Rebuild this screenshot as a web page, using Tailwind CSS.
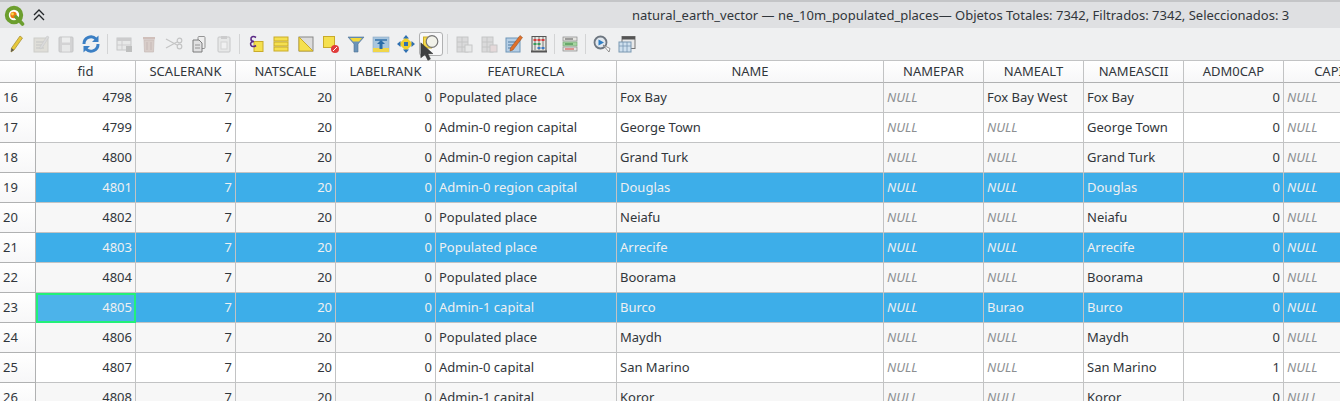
<!DOCTYPE html>
<html lang="es">
<head>
    <meta charset="UTF-8">
    <title>Tabla de atributos</title>
    <script src="https://cdn.jsdelivr.net/npm/@tailwindcss/browser@4"></script>
</head>
<body class="w-[1340px] h-[401px] overflow-hidden bg-[#eff0f1] text-[13px] text-[#31363b] font-['Noto_Sans',sans-serif]">

    <!-- title bar -->
    <div class="h-[28px] flex items-center bg-[#dfe0e2] border-t-2 border-[#c4c5c7] relative">
        <svg class="ml-[4px] w-[21px] h-[21px]" viewBox="0 0 21 21">
            <circle cx="10" cy="10" r="7.2" fill="#fff" stroke="#6c9e2e" stroke-width="4"/>
            <circle cx="9.5" cy="10" r="3.2" fill="#ee7913"/>
            <circle cx="8.5" cy="9" r="1.4" fill="#f7d94c"/>
            <path d="M12 12 L18.5 19" stroke="#6c9e2e" stroke-width="3.6" stroke-linecap="round"/>
        </svg>
        <svg class="ml-[7px] w-[14px] h-[14px]" viewBox="0 0 14 14" fill="none" stroke="#232629" stroke-width="1.3">
            <path d="M2 7 L7 2 L12 7"/><path d="M2 12 L7 7 L12 12"/>
        </svg>
        <span class="absolute left-[632px] top-[3px] leading-[20px] whitespace-nowrap">natural_earth_vector — ne_10m_populated_places— Objetos Totales: 7342, Filtrados: 7342, Seleccionados: 3</span>
    </div>

    <!-- toolbar -->
    <div class="h-[32px] pl-[3px] flex items-center bg-[#eff0f1] relative [&_svg]:blur-[0.3px]">
        <div class="w-[25px] h-[20px] flex justify-center"><svg class="w-[20px] h-[20px]" viewBox="0 0 20 20"><path d="M14 2 L16.5 4 L8 16 L5 18 L5.5 14 Z" fill="#e8c93a" stroke="#a8923a" stroke-width="0.8"/><path d="M5 18 L5.5 14 L8 16 Z" fill="#555"/></svg></div>
        <div class="w-[25px] h-[20px] flex justify-center opacity-40"><svg class="w-[20px] h-[20px]" viewBox="0 0 20 20"><rect x="3" y="4" width="14" height="14" fill="#c9c4b4" stroke="#9a9a90"/><path d="M5 8H13M5 11H13M5 14H13" stroke="#888"/><path d="M16 2 L18 3 L11 14 L9 15 L9 13 Z" fill="#bbb" stroke="#888" stroke-width="0.5"/></svg></div>
        <div class="w-[25px] h-[20px] flex justify-center opacity-40"><svg class="w-[20px] h-[20px]" viewBox="0 0 20 20"><rect x="3" y="3" width="14" height="15" rx="1" fill="#aaa" stroke="#888"/><rect x="6" y="3.5" width="8" height="5" fill="#e9e9e9"/><rect x="6" y="11" width="8" height="6.5" fill="#ddd"/></svg></div>
        <div class="w-[25px] h-[20px] flex justify-center"><svg class="w-[20px] h-[20px]" viewBox="0 0 20 20" fill="none" stroke-width="3"><path d="M3 10 A7 7 0 0 1 15 5" stroke="#3b7fc4"/><path d="M17 10 A7 7 0 0 1 5 15" stroke="#3b7fc4"/><path d="M17.5 1.5 V8 H11 Z" fill="#3b7fc4" stroke="none"/><path d="M2.5 18.5 V12 H9 Z" fill="#3b7fc4" stroke="none"/></svg></div>
        <div class="w-[8px] h-[20px] flex justify-center"><div class="w-px h-full bg-[#d3d4d5]"></div></div>
        <div class="w-[25px] h-[20px] flex justify-center opacity-40"><svg class="w-[20px] h-[20px]" viewBox="0 0 20 20"><rect x="3" y="4" width="14" height="12" fill="#ddd" stroke="#888"/><rect x="3" y="4" width="14" height="3" fill="#999"/><path d="M3 11H17M8 7V16" stroke="#999"/><rect x="12" y="12" width="6" height="6" fill="#777"/></svg></div>
        <div class="w-[25px] h-[20px] flex justify-center opacity-40"><svg class="w-[20px] h-[20px]" viewBox="0 0 20 20"><rect x="4" y="3" width="12" height="2.5" fill="#a3776a"/><path d="M5 6 H15 L14.5 18 H5.5 Z" fill="#b89a90" stroke="#8a6a60" stroke-width="0.7"/><path d="M8 8V16M12 8V16" stroke="#8a6a60"/></svg></div>
        <div class="w-[25px] h-[20px] flex justify-center opacity-50"><svg class="w-[20px] h-[20px]" viewBox="0 0 20 20" fill="none" stroke="#999" stroke-width="1.2"><path d="M2 5 L13 11 M2 14 L13 8"/><circle cx="15.5" cy="6.5" r="2.3"/><circle cx="15.5" cy="12.5" r="2.3"/></svg></div>
        <div class="w-[25px] h-[20px] flex justify-center opacity-75"><svg class="w-[20px] h-[20px]" viewBox="0 0 20 20"><rect x="9" y="2.5" width="7" height="12" rx="1" fill="#eee" stroke="#777"/><path d="M4 6 H10 L13 9 V18 H4 Z" fill="#ddd" stroke="#555"/><path d="M6 11H11M6 14H11" stroke="#777"/></svg></div>
        <div class="w-[25px] h-[20px] flex justify-center opacity-40"><svg class="w-[20px] h-[20px]" viewBox="0 0 20 20"><rect x="4" y="3" width="12" height="15" rx="1" fill="#ddd" stroke="#888"/><rect x="7" y="2" width="6" height="3" fill="#999"/><rect x="7" y="8" width="6" height="7" fill="#f2f2f2" stroke="#aaa"/></svg></div>
        <div class="w-[7px] h-[20px] flex justify-center"><div class="w-px h-full bg-[#d3d4d5]"></div></div>
        <div class="w-[25px] h-[20px] flex justify-center"><svg class="w-[20px] h-[20px]" viewBox="0 0 20 20"><rect x="8" y="7.5" width="9" height="10" fill="#f5e04f" stroke="#c9ab2a"/><path d="M10 3.5 C7 1.5 4.5 3 5 5.5 C5.3 7 7 7.5 8 7.5 C5.5 7.5 4 9 4.8 11 C5.5 13 8 13 10 11.5" fill="none" stroke="#5b2a86" stroke-width="1.6"/></svg></div>
        <div class="w-[25px] h-[20px] flex justify-center"><svg class="w-[20px] h-[20px]" viewBox="0 0 20 20" fill="#f5e04f" stroke="#c9ab2a"><rect x="3" y="3" width="14" height="4"/><rect x="3" y="8" width="14" height="4"/><rect x="3" y="13" width="14" height="4"/></svg></div>
        <div class="w-[25px] h-[20px] flex justify-center"><svg class="w-[20px] h-[20px]" viewBox="0 0 20 20"><rect x="3" y="3" width="14" height="14" fill="#dcdcdc" stroke="#888"/><path d="M3 3 L17 17 H3 Z" fill="#f5e04f" stroke="#c9ab2a"/></svg></div>
        <div class="w-[25px] h-[20px] flex justify-center"><svg class="w-[20px] h-[20px]" viewBox="0 0 20 20"><rect x="2.5" y="2.5" width="11" height="11" fill="#f5e04f" stroke="#c9ab2a"/><circle cx="14" cy="15" r="4" fill="#e03c3c"/><path d="M12 17 L16 13" stroke="#fff"/></svg></div>
        <div class="w-[25px] h-[20px] flex justify-center"><svg class="w-[20px] h-[20px]" viewBox="0 0 20 20"><path d="M2 3 H18 L12 10 V18 H8 V10 Z" fill="#6a93b8" stroke="#4f7396" stroke-width="0.6"/><path d="M4 4 H16 L13 7.5 H7 Z" fill="#f3d93a"/></svg></div>
        <div class="w-[25px] h-[20px] flex justify-center"><svg class="w-[20px] h-[20px]" viewBox="0 0 20 20"><rect x="2" y="3" width="16" height="15" fill="#a9c6de" stroke="#8aa9c4" stroke-width="0.6"/><rect x="2" y="14" width="16" height="4" fill="#f0d64a"/><path d="M4 6H16" stroke="#2a6ca8" stroke-width="1.4"/><path d="M10 6 L14 10 H11.5 V15 H8.5 V10 H6 Z" fill="#2a6ca8"/></svg></div>
        <div class="w-[25px] h-[20px] flex justify-center"><svg class="w-[20px] h-[20px]" viewBox="0 0 20 20"><rect x="5" y="5" width="10" height="10" fill="#efcf2e" transform="rotate(45 10 10)"/><path d="M10 1 L13 4.5 H7 Z M10 19 L13 15.5 H7 Z M1 10 L4.5 7 V13 Z M19 10 L15.5 7 V13 Z" fill="#2f6fb0"/><rect x="8" y="8" width="4" height="4" fill="#2f6fb0"/></svg></div>
        <div class="w-[25px] h-[24px] flex justify-center items-center">
            <div class="w-[24px] h-[24px] rounded-[3px] border border-[#b0b1b2] bg-[#f8f8f9] flex items-center justify-center"><svg class="w-[20px] h-[20px]" viewBox="0 0 20 20"><rect x="2.5" y="3" width="8" height="11" fill="#f5d94a" stroke="#c9ab2a"/><circle cx="11" cy="7.5" r="5.8" fill="#f2f2ea" stroke="#777" stroke-width="1.2"/></svg></div>
        </div>
        <div class="w-[8px] h-[20px] flex justify-center"><div class="w-px h-full bg-[#d3d4d5]"></div></div>
        <div class="w-[25px] h-[20px] flex justify-center opacity-40"><svg class="w-[20px] h-[20px]" viewBox="0 0 20 20"><rect x="3" y="3" width="11" height="15" fill="#bbb" stroke="#888"/><path d="M8 3V18M3 8H14M3 13H14" stroke="#888"/><rect x="11" y="11" width="7" height="7" fill="#ddd" stroke="#888"/></svg></div>
        <div class="w-[25px] h-[20px] flex justify-center opacity-40"><svg class="w-[20px] h-[20px]" viewBox="0 0 20 20"><rect x="3" y="3" width="11" height="15" fill="#bbb" stroke="#888"/><path d="M8 3V18M3 8H14M3 13H14" stroke="#888"/><rect x="11" y="11" width="7" height="7" fill="#d8b8b8" stroke="#888"/></svg></div>
        <div class="w-[25px] h-[20px] flex justify-center"><svg class="w-[20px] h-[20px]" viewBox="0 0 20 20"><rect x="2" y="4" width="14" height="14" fill="#b6cfe6" stroke="#6f95b8"/><path d="M4 8H12M4 11H10M4 14H9" stroke="#4f7ba3"/><path d="M16 1.5 L18.5 3.5 L9 16 L6 17 L6.5 14 Z" fill="#e0702a" stroke="#8a4a20" stroke-width="0.5"/></svg></div>
        <div class="w-[25px] h-[20px] flex justify-center"><svg class="w-[20px] h-[20px]" viewBox="0 0 20 20"><rect x="3" y="2.5" width="14" height="15" fill="#e9e9e4" stroke="#555"/><path d="M2 17.5H18" stroke="#555" stroke-width="2"/><path d="M6 3V16M10 3V16M14 3V16" stroke="#777"/><path d="M4.5 6H7.5M8.5 6H11.5M12.5 6H15.5" stroke="#d63a3a" stroke-width="2"/><path d="M4.5 10H7.5M8.5 10H11.5" stroke="#3a9a5a" stroke-width="2"/><path d="M8.5 14H11.5M12.5 14H15.5" stroke="#3a7ac4" stroke-width="2"/></svg></div>
        <div class="w-[6px] h-[20px] flex justify-center"><div class="w-px h-full bg-[#d3d4d5]"></div></div>
        <div class="w-[25px] h-[20px] flex justify-center"><svg class="w-[20px] h-[20px]" viewBox="0 0 20 20"><rect x="3" y="3" width="14" height="4" fill="#e4e4e0" stroke="#888" stroke-width="0.7"/><path d="M5 5H13" stroke="#555"/><rect x="3" y="8" width="14" height="4" fill="#a5d5a0" stroke="#78a878" stroke-width="0.7"/><path d="M5 10H13" stroke="#2f7a3a"/><rect x="3" y="13" width="14" height="4" fill="#e4e4e0" stroke="#888" stroke-width="0.7"/><path d="M5 15H14" stroke="#d64040"/></svg></div>
        <div class="w-[7px] h-[20px] flex justify-center"><div class="w-px h-full bg-[#d3d4d5]"></div></div>
        <div class="w-[25px] h-[20px] flex justify-center"><svg class="w-[20px] h-[20px]" viewBox="0 0 20 20"><circle cx="8.5" cy="8.5" r="6" fill="#e2e8ee" stroke="#6d7680" stroke-width="1.8"/><path d="M6.5 5.5 L12 8.5 L6.5 11.5 Z" fill="#2f7ec4"/><path d="M11 11 L17 18 L18 14.5 Z" fill="#fff" stroke="#777" stroke-width="0.8"/></svg></div>
        <div class="w-[25px] h-[20px] flex justify-center"><svg class="w-[20px] h-[20px]" viewBox="0 0 20 20"><rect x="5" y="2.5" width="13" height="12" fill="#e9e9e9" stroke="#777"/><rect x="5" y="2.5" width="13" height="3" fill="#555"/><rect x="2" y="8" width="12" height="10" fill="#cfe0ee" stroke="#7a98b2"/><path d="M2 12H14M6 8V18M10 8V18" stroke="#7a98b2" stroke-width="0.8"/></svg></div>
        <!-- mouse pointer over the toolbar button -->
        <svg class="absolute left-[420px] top-[14px] w-[15px] h-[20px]" viewBox="0 0 18 24"><path d="M1 1 L1 19 L6 15 L9.5 22 L12.5 20.5 L9.5 14 L15.5 14 Z" fill="#3f4142" stroke="#2b2c2d" stroke-width="0.6"/></svg>
    </div>

    <!-- attribute table -->
    <div id="attributeTable" class="w-[1340px] grid grid-cols-[36px_100px_100px_100px_100px_181px_267px_100px_100px_100px_100px_100px] grid-rows-[22px] auto-rows-[30px] bg-white border-t border-[#c2c3c4]"></div>

    <script>
        const headers = ["", "fid", "SCALERANK", "NATSCALE", "LABELRANK", "FEATURECLA", "NAME", "NAMEPAR", "NAMEALT", "NAMEASCII", "ADM0CAP", "CAPIN"];
        const rows = [
            [16, 4798, 0, "Populated place", "Fox Bay", "Fox Bay West", "Fox Bay", 0],
            [17, 4799, 0, "Admin-0 region capital", "George Town", null, "George Town", 0],
            [18, 4800, 0, "Admin-0 region capital", "Grand Turk", null, "Grand Turk", 0],
            [19, 4801, 0, "Admin-0 region capital", "Douglas", null, "Douglas", 0],
            [20, 4802, 0, "Populated place", "Neiafu", null, "Neiafu", 0],
            [21, 4803, 0, "Populated place", "Arrecife", null, "Arrecife", 0],
            [22, 4804, 0, "Populated place", "Boorama", null, "Boorama", 0],
            [23, 4805, 0, "Admin-1 capital", "Burco", "Burao", "Burco", 0],
            [24, 4806, 0, "Populated place", "Maydh", null, "Maydh", 0],
            [25, 4807, 0, "Admin-0 capital", "San Marino", null, "San Marino", 1],
            [26, 4808, 0, "Admin-1 capital", "Koror", null, "Koror", 0]
        ];
        const selected = [19, 21, 23];
        const table = document.getElementById("attributeTable");

        function addCell(text, classes) {
            const cell = document.createElement("div");
            cell.className = "overflow-hidden whitespace-nowrap flex items-center border-r border-b border-[#c2c3c4] " + classes;
            cell.textContent = text;
            table.appendChild(cell);
        }

        headers.forEach((h) => {
            addCell(h, "pt-px justify-center bg-gradient-to-b from-white to-[#f7f7f8] text-[#31363b] !border-b-[#b0b1b2]");
        });

        rows.forEach((r) => {
            const isSelected = selected.includes(r[0]);
            // the even rows in the view have the alternate background
            const back = isSelected ? "bg-[#3daee9] text-[#eff0f1]" : (r[0] % 2 === 0 ? "bg-[#f7f7f7] text-[#31363b]" : "bg-white text-[#31363b]");
            const left = "px-[3px] " + back;
            const right = "justify-end px-[3px] " + back;
            const nullText = "px-[3px] italic " + (isSelected ? "bg-[#3daee9] text-[#eff0f1]" : back + " !text-[#8c8f92]");

            addCell(r[0], "px-[3px] bg-gradient-to-b from-white to-[#f7f7f8] text-[#31363b] !border-[#b0b1b2]");
            addCell(r[1], r[0] === 23 ? "justify-end px-[2px] bg-[#4cb3ea] text-[#eff0f1] !border-2 !border-[#22f07a]" : right);
            addCell(7, right);
            addCell(20, right);
            addCell(r[2], right);
            addCell(r[3], left);
            addCell(r[4], left);
            addCell("NULL", nullText);
            if (r[5]) addCell(r[5], left); else addCell("NULL", nullText);
            addCell(r[6], left);
            addCell(r[7], right);
            addCell("NULL", nullText);
        });
    </script>
</body>
</html>
